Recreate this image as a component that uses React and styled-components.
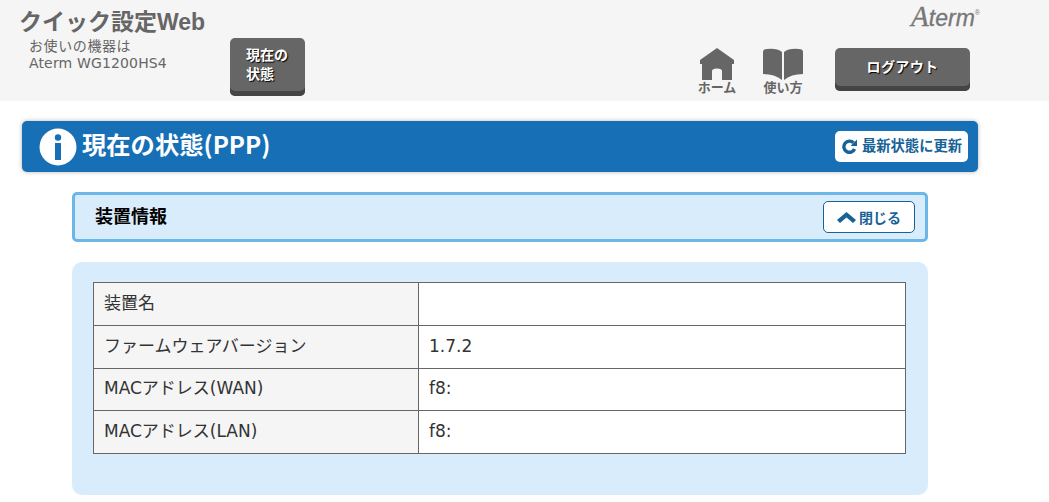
import React from 'react'
import styled, { createGlobalStyle } from 'styled-components'

const GlobalStyle = createGlobalStyle`
  html, body {
    margin: 0;
    padding: 0;
    background: #fff;
    font-family: "DejaVu Sans", "Noto Sans CJK JP", sans-serif;
    overflow: hidden;
  }
`

const Page = styled.div`
  width: 1049px;
  height: 502px;
  overflow: hidden;
`

const Header = styled.header`
  height: 101px;
  background: #f5f5f5;
  display: flex;
  box-sizing: border-box;
`

const Brand = styled.div`
  width: 230px;
  padding: 8px 0 0 19px;
  box-sizing: border-box;
`

const Title = styled.h1`
  margin: 0;
  font-family: "Liberation Sans", "Noto Sans CJK JP", sans-serif;
  font-size: 23px;
  line-height: 29px;
  font-weight: 700;
  color: #666;
`

const Device = styled.div`
  margin: 1px 0 0 10px;
  font-size: 14px;
  line-height: 17px;
  letter-spacing: 0.15px;
  color: #666;
`

const DeviceLabel = styled.span`
  letter-spacing: 0.6px;
`

const DarkButton = styled.button`
  border: none;
  padding: 0;
  background: #666;
  border-radius: 5px;
  box-shadow: inset 0 -5px 0 #444;
  color: #fff;
  font-family: "Noto Sans CJK JP", sans-serif;
  font-weight: 700;
  text-shadow: 1px 1px 1px #000;
`

const StatusButton = styled(DarkButton)`
  width: 75px;
  height: 58px;
  margin-top: 38px;
  padding: 0 0 7px 16px;
  font-size: 14px;
  line-height: 19px;
  text-align: left;
`

const HeaderRight = styled.div`
  margin-left: auto;
  width: 352px;
  display: flex;
  flex-direction: column;
`

const Logo = styled.div`
  height: 48px;
  padding: 3px 69px 0 0;
  box-sizing: border-box;
  text-align: right;
  font-family: "Liberation Sans", sans-serif;
  font-style: italic;
  font-size: 23px;
  line-height: 26px;
  color: #777;
  -webkit-text-stroke: 0.3px #777;
  sup {
    font-size: 7px;
    font-style: normal;
    vertical-align: 11px;
    line-height: 0;
    -webkit-text-stroke: 0;
  }
`

const LogoInitial = styled.span`
  font-family: "Liberation Serif", serif;
  font-size: 29px;
`

const Nav = styled.nav`
  display: flex;
  align-items: flex-start;
`

const NavItem = styled.a`
  width: 40px;
  margin-right: 26px;
  display: flex;
  flex-direction: column;
  align-items: center;
  font-family: "Noto Sans CJK JP", sans-serif;
  font-size: 13px;
  font-weight: 700;
  line-height: 14px;
  white-space: nowrap;
  color: #666;
  svg {
    display: block;
  }
`

const LogoutButton = styled(DarkButton)`
  width: 135px;
  height: 43px;
  margin: 0 10px 0 6px;
  padding-bottom: 7px;
  font-size: 14px;
  letter-spacing: 0.4px;
`

const Main = styled.main`
  padding: 20px 0 0 22px;
  width: 956px;
`

const PageBar = styled.div`
  height: 51px;
  background: #176fb5;
  border-radius: 5px;
  box-shadow: 0 0 4px rgba(0, 0, 0, 0.3);
  display: flex;
  align-items: center;
  padding: 0 10px 0 17px;
`

const PageTitle = styled.h2`
  margin: -6px 0 0 5px;
  font-family: "Noto Sans CJK JP", sans-serif;
  font-size: 24.3px;
  font-weight: 700;
  color: #fff;
`

const OutlineButton = styled.button`
  margin-left: auto;
  display: flex;
  align-items: center;
  justify-content: center;
  background: #fff;
  border-radius: 5px;
  color: #176296;
  font-family: "Noto Sans CJK JP", sans-serif;
  font-weight: 700;
  padding: 0;
`

const RefreshButton = styled(OutlineButton)`
  width: 133px;
  height: 31px;
  border: none;
  gap: 5px;
  padding: 0 0 3px 1px;
  font-size: 14.3px;
  line-height: 26px;
  svg {
    margin-top: 2px;
  }
`

const Content = styled.div`
  margin-left: 50px;
  width: 856px;
`

const SectionHead = styled.div`
  margin-top: 20px;
  height: 50px;
  box-sizing: border-box;
  background: #d9ecfc;
  border: 3px solid #6cb6e8;
  border-radius: 5px;
  display: flex;
  align-items: center;
  padding: 0 10px 0 20px;
`

const SectionTitle = styled.h3`
  margin: -5px 0 0;
  font-family: "Noto Sans CJK JP", sans-serif;
  font-size: 18px;
  font-weight: 700;
  color: #000;
`

const CloseButton = styled(OutlineButton)`
  width: 92px;
  height: 32px;
  border: 1px solid #176296;
  gap: 3px;
  padding-bottom: 1px;
  font-size: 14px;
  line-height: 26px;
  svg {
    margin-top: 1px;
  }
`

const Panel = styled.div`
  margin-top: 20px;
  height: 233px;
  box-sizing: border-box;
  background: #d9ecfc;
  border-radius: 10px;
  padding: 20px 22px 0 21px;
`

const InfoTable = styled.table`
  width: 813px;
  border-collapse: collapse;
  table-layout: fixed;
  background: #fff;
  font-family: "DejaVu Sans", "Noto Sans CJK JP", sans-serif;
  font-size: 17px;
  line-height: 20px;
  color: #333;
`

const Row = styled.tr`
  height: ${props => props.$height}px;
`

const Th = styled.th`
  width: 325px;
  box-sizing: border-box;
  border: 1px solid #666;
  background: #f5f5f5;
  padding: 0 10px 3px;
  font-weight: 400;
  text-align: left;
  white-space: nowrap;
`

const Td = styled.td`
  border: 1px solid #666;
  padding: 0 10px 3px;
`

const rows = [
  { label: '装置名', value: '', height: 43 },
  { label: 'ファームウェアバージョン', value: '1.7.2', height: 43 },
  { label: 'MACアドレス(WAN)', value: 'f8:', height: 42 },
  { label: 'MACアドレス(LAN)', value: 'f8:', height: 43 },
]

const App = () => {
  return (
    <Page>
      <GlobalStyle />
      <Header>
        <Brand>
          <Title>クイック設定Web</Title>
          <Device>
            <DeviceLabel>お使いの機器は</DeviceLabel>
            <br />
            Aterm WG1200HS4
          </Device>
        </Brand>
        <StatusButton>
          現在の
          <br />
          状態
        </StatusButton>
        <HeaderRight>
          <Logo>
            <LogoInitial>A</LogoInitial>term<sup>®</sup>
          </Logo>
          <Nav>
            <NavItem>
              <svg width="36" height="32" viewBox="0 0 36 32">
                <path
                  fill="#666"
                  d="M18 0 L35 12 L35 16 L33 16 L33 32 L23 32 L23 23 Q23 20.5 18 20.5 Q13 20.5 13 23 L13 32 L3 32 L3 16 L1 16 L1 12 Z"
                />
              </svg>
              ホーム
            </NavItem>
            <NavItem>
              <svg width="40" height="32" viewBox="0 0 40 32">
                <path
                  fill="#666"
                  d="M0 4 Q0 1 4 1 Q14 0 19 4 L19 32 Q12 26 0 26 Z M21 4 Q26 0 36 1 Q40 1 40 4 L40 26 Q28 26 21 32 Z"
                />
              </svg>
              使い方
            </NavItem>
            <LogoutButton>ログアウト</LogoutButton>
          </Nav>
        </HeaderRight>
      </Header>
      <Main>
        <PageBar>
          <svg width="38" height="38" viewBox="0 0 38 38">
            <circle cx="19" cy="19" r="18.5" fill="#fff" />
            <circle cx="19" cy="9.5" r="3.2" fill="#176fb5" />
            <rect x="16" y="15" width="6" height="17" fill="#176fb5" />
          </svg>
          <PageTitle>現在の状態(PPP)</PageTitle>
          <RefreshButton>
            <svg width="15" height="15" viewBox="0 0 15 15">
              <path
                fill="none"
                stroke="#176296"
                strokeWidth="3.4"
                d="M12.6 10 A5.6 5.6 0 1 1 11.5 3.8"
              />
              <path fill="#176296" d="M8.5 7 L15 7 L15 0.5 Z" />
            </svg>
            最新状態に更新
          </RefreshButton>
        </PageBar>
        <Content>
          <SectionHead>
            <SectionTitle>装置情報</SectionTitle>
            <CloseButton>
              <svg width="19" height="11" viewBox="0 0 19 11">
                <path fill="#176296" d="M9.5 0 L19 8 L16 11 L9.5 5.5 L3 11 L0 8 Z" />
              </svg>
              閉じる
            </CloseButton>
          </SectionHead>
          <Panel>
            <InfoTable>
              <tbody>
                {rows.map(row => (
                  <Row key={row.label} $height={row.height}>
                    <Th>{row.label}</Th>
                    <Td>{row.value}</Td>
                  </Row>
                ))}
              </tbody>
            </InfoTable>
          </Panel>
        </Content>
      </Main>
    </Page>
  )
}

export default App
